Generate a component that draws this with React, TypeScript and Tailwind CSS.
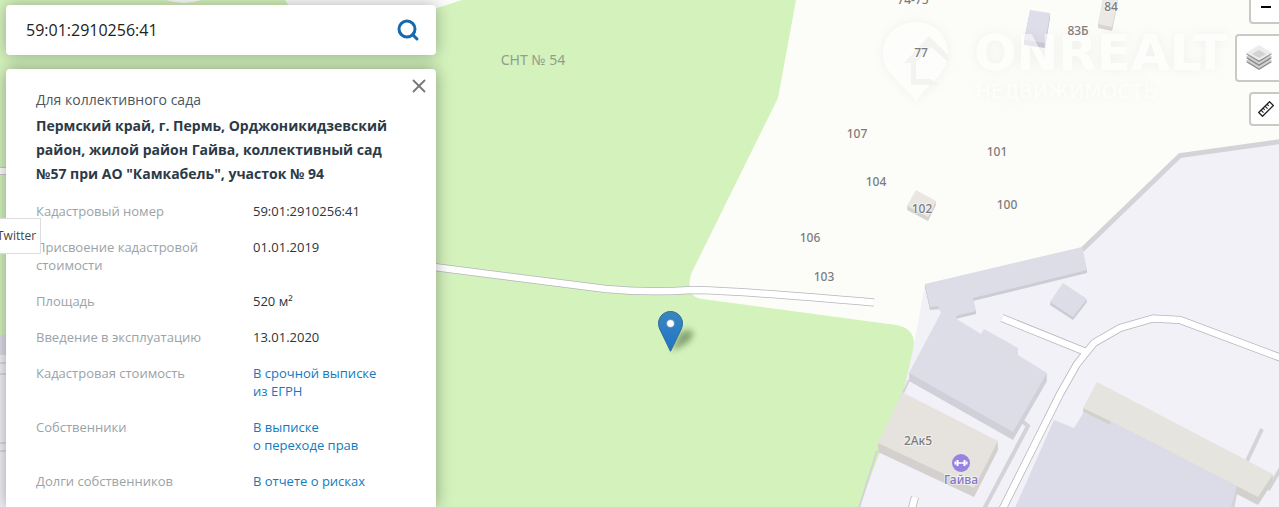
import { Search, X } from "lucide-react";

interface Field {
  label: string;
  value: string;
  href?: string;
}

interface MapLabel {
  text: string;
  x: number;
  y: number;
}

const FIELDS: Field[] = [
  { label: "Кадастровый номер", value: "59:01:2910256:41" },
  { label: "Присвоение кадастровой стоимости", value: "01.01.2019" },
  { label: "Площадь", value: "520 м²" },
  { label: "Введение в эксплуатацию", value: "13.01.2020" },
  { label: "Кадастровая стоимость", value: "В срочной выписке из\u00a0ЕГРН", href: "#egrn" },
  { label: "Собственники", value: "В выписке о\u00a0переходе\u00a0прав", href: "#owners" },
  { label: "Долги собственников", value: "В отчете о рисках", href: "#risks" },
];

const MAP_LABELS: MapLabel[] = [
  { text: "74-75", x: 913, y: 4 },
  { text: "84", x: 1111, y: 11 },
  { text: "83Б", x: 1078, y: 35 },
  { text: "77", x: 921, y: 57 },
  { text: "107", x: 857, y: 138 },
  { text: "101", x: 997, y: 156 },
  { text: "104", x: 876, y: 186 },
  { text: "100", x: 1007, y: 209 },
  { text: "102", x: 922, y: 213 },
  { text: "106", x: 810, y: 242 },
  { text: "103", x: 824, y: 281 },
];

// d is the roof outline, h is how far the wall drops below it
const BUILDINGS = [
  { d: "M925 284L1082 247L1087 270L973 298L976 311L955 316L941 306L930 307Z", h: 3, roof: "#dcdde7", wall: "#cbccd4" },
  { d: "M941 304L955 318L981 334L984 329L1018 348V355L1047 373L1013 432L909 373L941 313Z", h: 8, roof: "#dcdde7", wall: "#cfd0d8" },
  { d: "M935 300L970 296L955 319L941 313Z", h: 0, roof: "#dcdde7", wall: "#cbccd4" },
  { d: "M1063 283L1087 299L1073 317L1050 302Z", h: 3, roof: "#dcdde7", wall: "#cbccd4" },
  { d: "M902 392L998 441L974 488L878 443Z", h: 9, roof: "#e6e3df", wall: "#d3d0cd" },
  { d: "M1097 382L1273 474L1258 497L1110 421L1083 408Z", h: 8, roof: "#e6e4df", wall: "#d3d1cd" },
  { d: "M1054 420L1074 428L1084 412L1110 425V421L1237 486L1230 510H1014Z", h: 0, roof: "#dcdce8", wall: "#cbccd4" },
  { d: "M1030 10L1050 13L1045 43L1024 40Z", h: 5, roof: "#dddeea", wall: "#cdcdd8" },
  { d: "M1103 -2L1118 -2L1112 27L1098 24Z", h: 4, roof: "#ebe8e5", wall: "#d9d6d3" },
  { d: "M916 190L936 201L928 217L907 206Z", h: 4, roof: "#e9e6e3", wall: "#d5d2cf" },
];

const ROADS = [
  "M430 266.500L606 289Q650 293 692 290Q730 290 874 302.500",
  "M1002 318L1086 352",
  "M1001 512L1033 448L1060 394L1077 364L1094 343L1120 328L1153 318.500L1180 320L1284 359",
  "M915 497L911 512",
  "M-2 171H8",
];

function Building({ d, h, roof, wall }: (typeof BUILDINGS)[number]) {
  return (
    <g>
      {Array.from({ length: h }, (_, i) => (
        <path key={i} d={d} fill={wall} transform={`translate(0 ${i + 1})`} />
      ))}
      <path d={d} fill={roof} />
    </g>
  );
}

function Watermark() {
  return (
    <g fill="#fff" opacity="0.5" style={{ filter: "drop-shadow(0 0 6px rgba(0,0,0,0.1))" }}>
      <path d="M916 22C897 22 883 36 883 54C883 74 905 84 916 102C927 84 948 74 948 54C948 36 935 22 916 22Z" />
      <path d="M904 63L929 36L948 55V62L931 47L916 62V79H930L940 85H911V63Z" fill="#ecece9" />
      <text x="974" y="70" fontSize="50" fontWeight="700" fontFamily="'DejaVu Sans', sans-serif">
        ONREALT
      </text>
      <text x="976" y="98" fontSize="20" fontFamily="'DejaVu Sans', sans-serif">
        НЕДВИЖИМОСТЬ
      </text>
    </g>
  );
}

function MapPin() {
  return (
    <g transform="translate(658 311)">
      <path d="M13 40L22 22Q34 15 35 23Q34 32 13 40Z" fill="#23401a" opacity="0.45" style={{ filter: "blur(3px)" }} />
      <path
        d="M12.500 0.500C5.900 0.500 0.500 5.800 0.500 12.400C0.500 15.500 1.700 18 2.700 20L12.500 40.300L22.300 20C23.300 18 24.500 15.500 24.500 12.400C24.500 5.800 19.100 0.500 12.500 0.500Z"
        fill="url(#pin)"
        stroke="#2e6c97"
      />
      <circle cx="12.500" cy="12.500" r="4" fill="#fff" stroke="#2e6c97" strokeWidth="0.600" />
    </g>
  );
}

function CadastreMap() {
  return (
    <svg
      className="absolute inset-0 h-full w-full"
      viewBox="0 0 1279 507"
      preserveAspectRatio="xMidYMid slice"
      role="img"
      aria-label="Карта участка"
    >
      <defs>
        <linearGradient id="pin" x1="0" y1="0" x2="0" y2="1">
          <stop offset="0" stopColor="#3a86c0" />
          <stop offset="1" stopColor="#1f74c8" />
        </linearGradient>
      </defs>
      <rect width="1279" height="507" fill="#fcfdf8" />

      {/* Greenery */}
      <path
        d="M0 0H796L778 98L692 272Q687 284 692 294Q695 298 702 299L896 325Q914 328 914 344Q913 372 902 400L859 507H0Z"
        fill="#d3f2bc"
      />
      <path d="M285 0L289 6H430L437 8L462 0ZM166 0Q184 6 201 0Z" fill="#fcfcfa" />

      {/* Industrial zone */}
      <path d="M925 284L1082 249L1180 157L1279 143V507H859L903 393L913 350Z" fill="#f2f1f8" />
      <path d="M0 335H10V507H0Z" fill="#f2f1f8" />
      <path d="M0 335H10V355H0Z" fill="#dcdde7" />
      <g fill="none" stroke="#d3d3d8" strokeWidth="5">
        <path d="M1082 250L1180 155.500L1284 141" />
        <path d="M1022 421L1028 426L984 509" strokeWidth="4" />
        <path d="M1262 429L1247 461" strokeWidth="4" />
        <path d="M1281 468L1268 490" strokeWidth="4" />
        <path d="M909 380L903 393M877 451L859 508" strokeWidth="2" />
        <path d="M1236 486L1232 507" />
      </g>

      {/* Roads go under the buildings */}
      {ROADS.map((d) => (
        <path key={d} d={d} fill="none" stroke="#b5b5bd" strokeWidth="8" />
      ))}
      {ROADS.map((d) => (
        <path key={d} d={d} fill="none" stroke="#fff" strokeWidth="6.500" />
      ))}
      <path d="M0 363H8M0 374H8M0 443H8M0 451H8" stroke="#c4c4cc" />

      {BUILDINGS.map((b) => (
        <Building key={b.d} {...b} />
      ))}

      <Watermark />

      {/* Captions */}
      <g
        fontFamily="'Noto Sans', sans-serif"
        fontSize="12"
        fontWeight="500"
        textAnchor="middle"
        fill="#7c7c7c"
        stroke="#fff"
        strokeOpacity="0.5"
        strokeWidth="2"
        paintOrder="stroke"
      >
        {MAP_LABELS.map((l) => (
          <text key={l.text} x={l.x} y={l.y}>
            {l.text}
          </text>
        ))}
        <text x="918" y="445">2Ак5</text>
        <text x="961" y="484" fill="#8377c8">Гайва</text>
      </g>
      <text x="533" y="65" fontFamily="'Noto Sans', sans-serif" fontSize="14" textAnchor="middle" fill="#939e8d">
        СНТ № 54
      </text>

      {/* Gym */}
      <circle cx="961" cy="463" r="9" fill="#9685e0" />
      <path d="M958 463H964" stroke="#fff" strokeWidth="1.500" />
      <path d="M957.500 460V466M964.500 460V466" stroke="#fff" strokeWidth="2" />
      <path d="M955.500 461.500V464.500M966.500 461.500V464.500" stroke="#fff" strokeWidth="2" />

      <MapPin />
    </svg>
  );
}

function LayersIcon() {
  return (
    <svg className="h-[26px] w-[26px]" viewBox="0 0 26 26" aria-hidden="true">
      <path d="M0 17L13 10L26 17L13 25Z" fill="#8d8d8d" />
      <path d="M0 15.500L13 8L26 15.500L13 23.500Z" fill="#d0d0d0" />
      <path d="M0 13L13 6L26 13L13 21Z" fill="#858585" />
      <path d="M0 11.500L13 4L26 11.500L13 19.500Z" fill="#cfcfcf" />
      <path d="M0 9L13 1L26 9L13 17Z" fill="#8a8a8a" />
      <path d="M0 8L13 0L26 8L13 15.500Z" fill="#ececec" />
      <path d="M6 9L13 5L20 9L13 13Z" fill="#d2d2d2" />
    </svg>
  );
}

function RulerIcon() {
  return (
    <svg className="h-4 w-4" viewBox="0 0 16 16" fill="none" stroke="#222" aria-hidden="true">
      <path d="M0.700 11.500L11.500 0.700L15.300 4.500L4.500 15.300Z" strokeWidth="1.300" />
      <path d="M3 9.200L5.500 11.700M5 7.200L6.700 8.900M7 5.200L9.500 7.700M9 3.200L10.700 4.900" strokeWidth="1.200" />
    </svg>
  );
}

function MapControls() {
  const base = "flex items-center justify-center rounded border-2 border-black/20 bg-white bg-clip-padding";
  return (
    <div className="-mt-2.5 -mr-1 flex flex-col items-end gap-2.5">
      <button type="button" aria-label="Уменьшить" className={`${base} h-[34px] w-[34px]`}>
        <svg className="h-4 w-4" viewBox="0 0 16 16" aria-hidden="true">
          <path d="M3 7H13V9H3Z" fill="#000" />
        </svg>
      </button>
      <button type="button" aria-label="Слои" className={`${base} h-12 w-12`}>
        <LayersIcon />
      </button>
      <button type="button" aria-label="Линейка" className={`${base} h-[34px] w-[34px]`}>
        <RulerIcon />
      </button>
    </div>
  );
}

function SearchBox() {
  return (
    <form
      className="flex h-[50px] shrink-0 items-center rounded bg-white pr-4 pl-5 shadow-[0_0_16px_rgba(0,0,0,0.3)]"
      onSubmit={(e) => e.preventDefault()}
    >
      <input
        type="text"
        aria-label="Кадастровый номер или адрес"
        defaultValue="59:01:2910256:41"
        className="min-w-0 flex-1 text-base text-[#222] outline-none"
      />
      <button type="submit" aria-label="Найти" className="text-[#1769ae]">
        <Search className="h-6 w-6" strokeWidth={3} />
      </button>
    </form>
  );
}

function InfoCard() {
  return (
    <section className="relative flex-1 rounded-t bg-white px-[30px] pt-[21px] shadow-[0_0_16px_rgba(0,0,0,0.35)]">
      <button type="button" aria-label="Закрыть" className="absolute top-1.5 right-1.5 text-[#777]">
        <X className="h-[22px] w-[22px]" strokeWidth={2} />
      </button>
      <p className="mb-1 text-sm leading-5 text-[#4b5660]">Для коллективного сада</p>
      <h1 className="text-sm leading-6 font-bold text-[#2c3a47]">
        Пермский край, г. Пермь, Орджоникидзевский район, жилой район Гайва, коллективный сад №57 при АО
        "Камкабель", участок № 94
      </h1>
      <dl className="mt-4 flex flex-col gap-[18px] text-[13px] leading-[18px]">
        {FIELDS.map((f) => (
          <div key={f.label} className="grid grid-cols-[217px_1fr]">
            <dt className="pr-8 text-[#9aa3a9]">{f.label}</dt>
            <dd className="text-[#2c3540]">
              {f.href ? (
                <a href={f.href} className="text-[#117bc0]">
                  {f.value}
                </a>
              ) : (
                f.value
              )}
            </dd>
          </div>
        ))}
      </dl>
    </section>
  );
}

export default function App() {
  return (
    <main className="relative h-screen overflow-hidden font-['Open_Sans',sans-serif]">
      <CadastreMap />
      <div className="relative flex h-full items-start justify-between">
        <div className="ml-1.5 flex h-full w-[430px] flex-col gap-3.5 pt-[5px]">
          <SearchBox />
          <InfoCard />
        </div>
        <MapControls />
      </div>
      <div
        role="tooltip"
        className="absolute top-[218px] -left-2 border border-[#ddd] bg-white py-2 pr-1 pl-1 text-xs leading-[18px] text-[#444]"
      >
        Twitter
      </div>
    </main>
  );
}
